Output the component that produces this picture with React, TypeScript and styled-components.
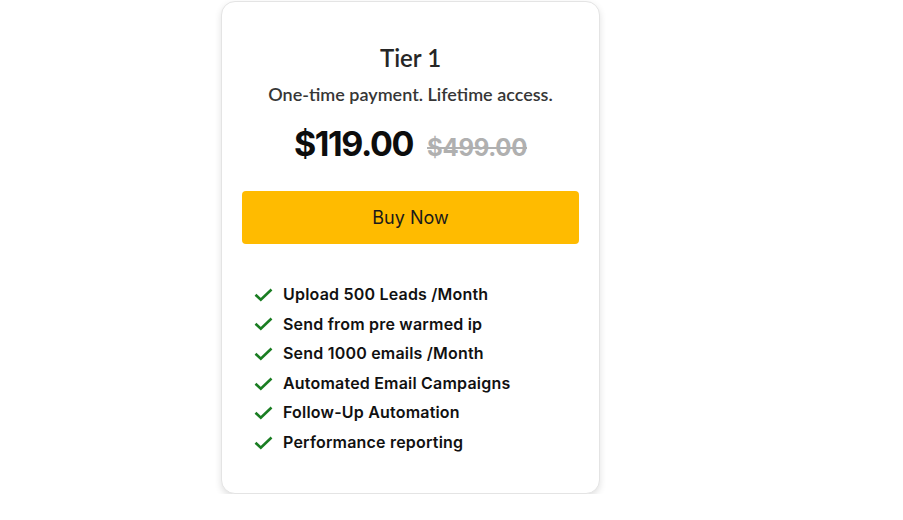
import styled, { createGlobalStyle } from "styled-components";

const GlobalStyle = createGlobalStyle`
  body {
    margin: 0;
    background: #ffffff;
    font-family: "Inter", "Liberation Sans", sans-serif;
  }
`;

const Page = styled.div`
  padding: 1px 0 0 221px;
`;

const Card = styled.div`
  box-sizing: border-box;
  width: 379px;
  height: 493px;
  padding: 41px 20px 0;
  border: 1px solid #e4e4e4;
  border-radius: 14px;
  box-shadow: 0 3px 7px rgba(0, 0, 0, 0.12);
  background: #fff;
  display: flex;
  flex-direction: column;
  align-items: center;
`;

const Title = styled.h2`
  margin: 0;
  font-family: "Lato", sans-serif;
  font-weight: 600;
  font-size: 24px;
  line-height: 30px;
  color: #262626;
`;

const Subtitle = styled.p`
  margin: 9px 0 0;
  font-family: "Lato", sans-serif;
  font-weight: 600;
  font-size: 18px;
  line-height: 24px;
  color: #363636;
`;

const PriceRow = styled.div`
  margin-top: 17px;
  display: flex;
  align-items: baseline;
  gap: 14px;
`;

const Price = styled.span`
  font-size: 34px;
  font-weight: 700;
  letter-spacing: -1.4px;
  color: #0d0d0d;
`;

const OldPrice = styled.span`
  font-size: 24px;
  font-weight: 700;
  letter-spacing: -0.3px;
  color: #b0b0b0;
  text-decoration: line-through;
`;

const BuyButton = styled.button`
  margin-top: 27px;
  width: 100%;
  height: 53px;
  border: none;
  border-radius: 4px;
  background: #ffbb00;
  font-family: "Inter", sans-serif;
  font-size: 18px;
  font-weight: 400;
  color: #1a1a1a;
  cursor: pointer;
`;

const Features = styled.ul`
  list-style: none;
  align-self: stretch;
  margin: 40px 0 0;
  padding: 0 0 0 12px;
  display: flex;
  flex-direction: column;
  gap: 8px;
`;

const Feature = styled.li`
  display: flex;
  align-items: center;
  gap: 10px;
  font-size: 16px;
  font-weight: 600;
  letter-spacing: 0.2px;
  line-height: 21.6px;
  color: #111;
`;

const Check = () => (
  <svg width="19" height="14" viewBox="0 0 19 14" fill="none">
    <path d="M1.5 6.8 L6.8 11.8 L17.5 1.5" stroke="#1a7d22" strokeWidth="2.6" />
  </svg>
);

const features = [
  "Upload 500 Leads /Month",
  "Send from pre warmed ip",
  "Send 1000 emails /Month",
  "Automated Email Campaigns",
  "Follow-Up Automation",
  "Performance reporting",
];

export default function App() {
  return (
    <>
      <GlobalStyle />
      <Page>
        <Card>
          <Title>Tier 1</Title>
          <Subtitle>One-time payment. Lifetime access.</Subtitle>
          <PriceRow>
            <Price>$119.00</Price>
            <OldPrice>$499.00</OldPrice>
          </PriceRow>
          <BuyButton>Buy Now</BuyButton>
          <Features>
            {features.map((f) => (
              <Feature key={f}>
                <Check />
                {f}
              </Feature>
            ))}
          </Features>
        </Card>
      </Page>
    </>
  );
}
